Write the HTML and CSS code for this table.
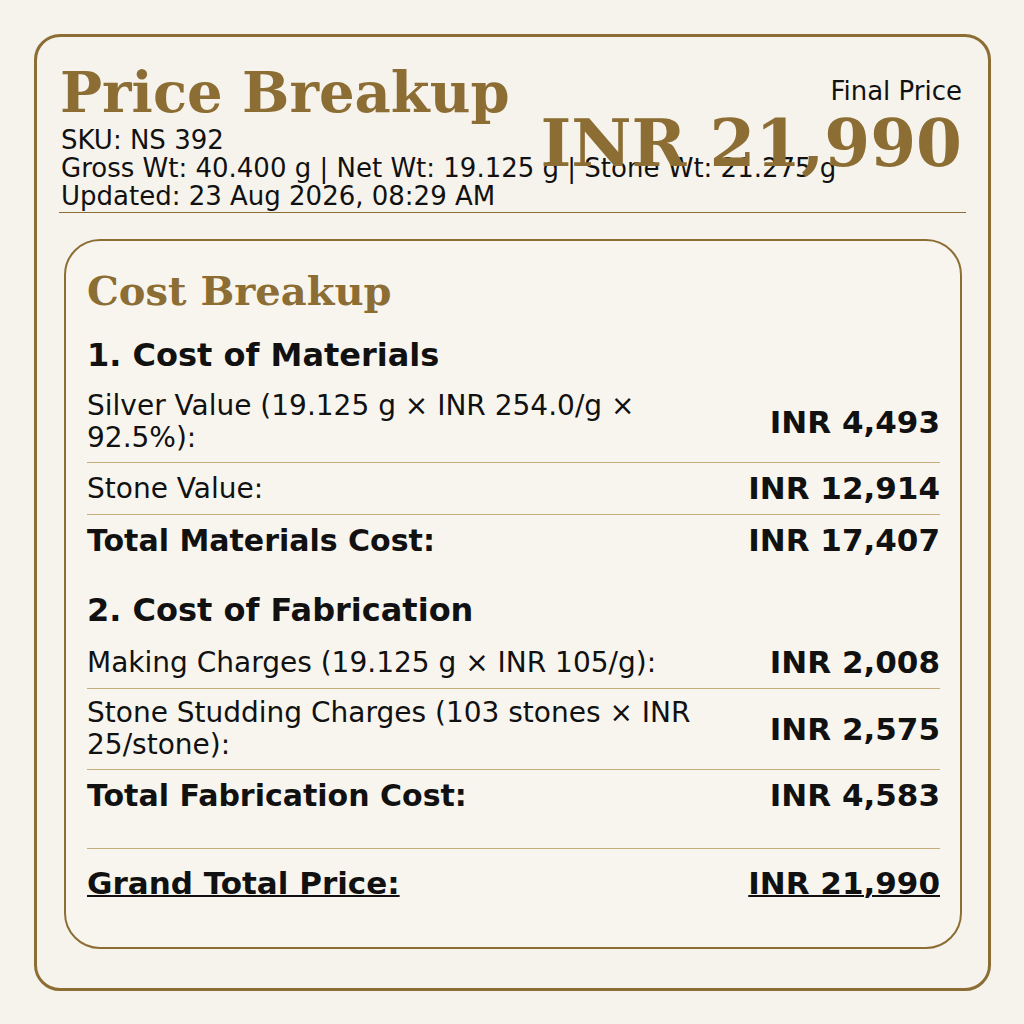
FILE: index.html
```html
<!DOCTYPE html>
<html lang="en">
<head>
<meta charset="utf-8">
<title>Price Breakup</title>
<link rel="stylesheet" href="styles.css">
</head>
<body>
<div class="card">
  <header class="header">
    <div class="header-left">
      <h1 class="title">Price Breakup</h1>
      <div class="meta">SKU: NS 392</div>
      <div class="meta">Gross Wt: 40.400 g | Net Wt: 19.125 g | Stone Wt: 21.275 g</div>
      <div class="meta">Updated: 23 Aug 2026, 08:29 AM</div>
    </div>
    <div class="header-right">
      <div class="final-label">Final Price</div>
      <div class="final-value">INR 21,990</div>
    </div>
  </header>
  <div class="rule"></div>
  <section class="breakup">
    <h2 class="breakup-title">Cost Breakup</h2>

    <h3 class="section-title">1. Cost of Materials</h3>
    <div class="row line">
      <div class="label">Silver Value (19.125 g × INR 254.0/g × 92.5%):</div>
      <div class="value">INR 4,493</div>
    </div>
    <div class="row line">
      <div class="label">Stone Value:</div>
      <div class="value">INR 12,914</div>
    </div>
    <div class="row total">
      <div class="label">Total Materials Cost:</div>
      <div class="value">INR 17,407</div>
    </div>

    <h3 class="section-title second">2. Cost of Fabrication</h3>
    <div class="row line">
      <div class="label">Making Charges (19.125 g × INR 105/g):</div>
      <div class="value">INR 2,008</div>
    </div>
    <div class="row line">
      <div class="label">Stone Studding Charges (103 stones × INR 25/stone):</div>
      <div class="value">INR 2,575</div>
    </div>
    <div class="row total">
      <div class="label">Total Fabrication Cost:</div>
      <div class="value">INR 4,583</div>
    </div>

    <div class="row grand">
      <div class="label">Grand Total Price:</div>
      <div class="value">INR 21,990</div>
    </div>
  </section>
</div>
</body>
</html>
```

FILE: styles.css
```css
* { box-sizing: border-box; }

html, body {
  margin: 0;
  padding: 0;
  background: #f6f3ec;
}

body {
  padding: 34px 0 0 34px;
  font-family: "DejaVu Sans", "Liberation Sans", sans-serif;
  color: #111111;
}

.card {
  width: 957px;
  height: 957px;
  border: 3px solid #8c6d33;
  border-radius: 26px;
  padding: 21px 22px 0 22px;
  background: #f6f3ec;
}

.header {
  display: flex;
  justify-content: space-between;
  align-items: flex-start;
}

.header-left {
  flex: 0 0 auto;
  white-space: nowrap;
  width: 0;
}

.title {
  margin: 0;
  font-family: "DejaVu Serif", "Liberation Serif", serif;
  font-weight: bold;
  font-size: 56px;
  line-height: 68px;
  color: #8c6d33;
  padding-left: 1px;
}

.meta {
  font-size: 26px;
  line-height: 28px;
  padding-left: 2px;
}

.header-right {
  text-align: right;
  margin-top: 19px;
}

.final-label {
  font-size: 26px;
  line-height: 28px;
  padding-right: 4px;
}

.final-value {
  font-family: "DejaVu Serif", "Liberation Serif", serif;
  font-weight: bold;
  font-size: 66px;
  line-height: 70px;
  margin-top: 3px;
  padding-right: 4px;
  color: #8c6d33;
  white-space: nowrap;
}

.rule {
  height: 1px;
  background: #8c6d33;
  margin-top: 2px;
}

.breakup {
  margin: 26px 4px 0 5px;
  height: 710px;
  border: 2px solid #8c6d33;
  border-radius: 36px;
  background: #f8f5ef;
  padding: 26px 20px 0 21px;
}

.breakup-title {
  margin: 0;
  font-family: "DejaVu Serif", "Liberation Serif", serif;
  font-weight: bold;
  font-size: 40px;
  line-height: 48px;
  color: #8c6d33;
}

.section-title {
  margin: 21px 0 8px 0;
  font-size: 32px;
  line-height: 38px;
  font-weight: bold;
}

.section-title.second {
  margin-top: 25px;
}

.row {
  display: flex;
  align-items: center;
  justify-content: space-between;
  gap: 24px;
  padding: 8px 0;
  min-height: 51px;
}

.row.line {
  border-bottom: 1px solid #c4ad78;
  min-height: 52px;
}

.label {
  font-size: 28px;
  line-height: 32px;
}

.value {
  font-size: 31px;
  line-height: 35px;
  font-weight: bold;
  white-space: nowrap;
}

.row.total .label {
  font-size: 30px;
  line-height: 35px;
  font-weight: bold;
}

.row.grand {
  margin-top: 27px;
  border-top: 1px solid #c4ad78;
  padding-top: 16px;
}

.row.grand .label,
.row.grand .value {
  font-size: 31px;
  line-height: 36px;
  font-weight: bold;
  text-decoration: underline;
  text-decoration-thickness: 2px;
}
```
